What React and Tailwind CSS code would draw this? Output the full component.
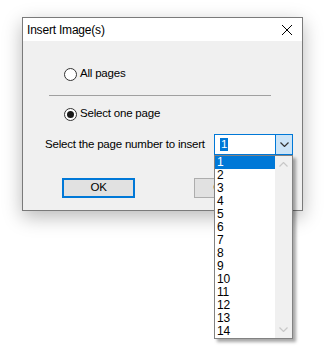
import React from 'react'

const pages = Array.from({ length: 14 }, (_, i) => i + 1)

function Radio({ checked }) {
  return (
    <span className="flex h-[13px] w-[13px] shrink-0 items-center justify-center rounded-full border border-[#333333] bg-white">
      {checked ? <span className="h-[7px] w-[7px] rounded-full bg-[#1a1a1a]" /> : null}
    </span>
  )
}

function Chevron({ up, color }) {
  return (
    <svg width="9" height="5" viewBox="0 0 9 5" className="block">
      <path d={up ? 'M0.5 4.5 L4.5 0.5 L8.5 4.5' : 'M0.5 0.5 L4.5 4.5 L8.5 0.5'} fill="none" stroke={color} strokeWidth="1.2" />
    </svg>
  )
}

export default function App() {
  return (
    <div className="min-h-screen bg-white pl-[22px] pt-[17px] font-['Liberation_Sans',Arial,sans-serif] text-[11.5px] tracking-[-0.2px] text-black">
      <div className="relative w-[281px] border border-[#7a7a7a] bg-[#f0f0f0] shadow-[0_6px_18px_rgba(0,0,0,0.28)]">
        <div className="flex h-[23px] items-center justify-between bg-white pl-[4px] pr-[10px]">
          <span className="text-[12px]">Insert Image(s)</span>
          <svg width="10" height="10" viewBox="0 0 10 10" className="block">
            <path d="M0 0 L10 10 M10 0 L0 10" stroke="#000" strokeWidth="1" />
          </svg>
        </div>

        <div className="h-[169px] pt-[26px]">
          <label className="flex h-[14px] items-center gap-[3px] pl-[41px]">
            <Radio />
            <span>All pages</span>
          </label>

          <div className="ml-[26px] mt-[14px] h-px w-[222px] bg-[#a0a0a0]" />

          <label className="mt-[11px] flex h-[14px] items-center gap-[3px] pl-[41px]">
            <Radio checked />
            <span>Select one page</span>
          </label>

          <div className="mt-[13px] flex h-[21px] items-center pl-[22px]">
            <span className="w-[169px]">Select the page number to insert</span>
            <div className="relative z-10 flex h-[21px] w-[79px] border border-[#0078d7] bg-white">
              <div className="flex flex-1 items-center pl-[5px]">
                <span className="bg-[#0078d7] px-px leading-[13px] text-white">1</span>
              </div>
              <div className="flex w-[17px] items-center justify-center border-l border-[#0078d7] bg-[#cce4f7]">
                <Chevron color="#333333" />
              </div>

              <div className="absolute left-[-1px] top-[20px] flex h-[184px] w-[79px] border border-[#828282] bg-white shadow-[3px_3px_3px_rgba(0,0,0,0.35)]">
                <ul className="w-[60px]">
                  {pages.map((page) => (
                    <li
                      key={page}
                      className={
                        page === 1
                          ? 'h-[13px] bg-[#0078d7] pl-[2px] text-[12px] leading-[13px] text-white'
                          : 'h-[13px] pl-[2px] text-[12px] leading-[13px]'
                      }
                    >
                      {page}
                    </li>
                  ))}
                </ul>
                <div className="flex w-[17px] flex-col items-center justify-between bg-[#f0f0f0] py-[6px]">
                  <Chevron up color="#c8c8c8" />
                  <Chevron color="#c8c8c8" />
                </div>
              </div>
            </div>
          </div>

          <div className="mt-[23px] flex h-[20px] pl-[39px]">
            <button className="flex h-[20px] w-[73px] items-center justify-center border-2 border-[#0078d7] bg-[#e1e1e1]">
              OK
            </button>
            <button className="ml-[59px] flex h-[20px] w-[73px] items-center justify-center border border-[#adadad] bg-[#e1e1e1]">
              Cancel
            </button>
          </div>
        </div>
      </div>
    </div>
  )
}
